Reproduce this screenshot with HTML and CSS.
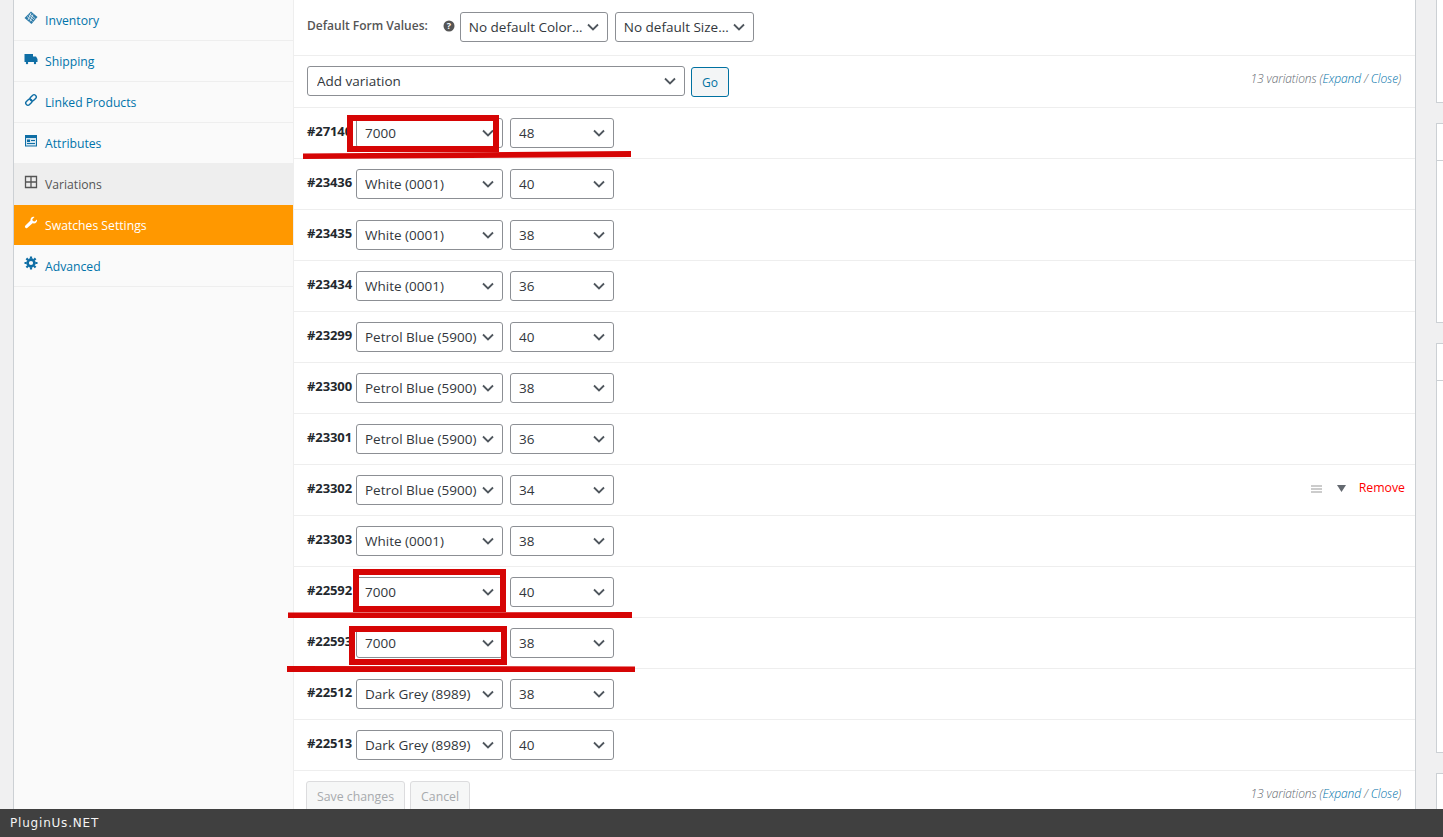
FILE: index.html
```html
<!DOCTYPE html>
<html lang="en">
<head>
<meta charset="utf-8">
<title>Variations</title>
<link rel="stylesheet" href="styles.css">
</head>
<body>
<div class="page">
  <div class="metabox">
    <ul class="tabs">
      <li class="tab"><svg class="ico" viewBox="0 0 14 14"><path d="M7 0.500 13.500 6 7.500 13 0.500 7Z" fill="#2b7aa8"/><path d="M4.500 4 10 9M6 3 11.500 8M3 5.500 8.500 10.500M7 2 4 9M9 3.500 6 10.500" stroke="#fafafa" stroke-width=".7"/></svg><a>Inventory</a></li>
      <li class="tab"><svg class="ico" viewBox="0 0 14 14"><path d="M0.500 2H9V10H0.500ZM9 4.500H12L13.500 7V10H9Z" fill="#0f6ea5"/><circle cx="3" cy="11" r="1.200" fill="#0f6ea5"/><circle cx="11" cy="11" r="1.200" fill="#0f6ea5"/></svg><a>Shipping</a></li>
      <li class="tab"><svg class="ico" viewBox="0 0 14 14"><g fill="none" stroke="#0f6ea5" stroke-width="1.400" transform="rotate(-45 7 7)"><rect x="0.500" y="4.800" width="7" height="4.400" rx="2.200"/><rect x="6.500" y="4.800" width="7" height="4.400" rx="2.200"/></g></svg><a>Linked Products</a></li>
      <li class="tab"><svg class="ico" viewBox="0 0 14 14"><path d="M1 1H13V12.500H1Z" fill="#0f6ea5"/><path d="M2 4H12V11.500H2Z" fill="#d5e6f0"/><path d="M3 5.500H6V8H3ZM7 6H11V7H7ZM3 9H11V10H3Z" fill="#0f6ea5"/></svg><a>Attributes</a></li>
      <li class="tab tab-active"><svg class="ico" viewBox="0 0 14 14"><path d="M1.500 1.500H12.500V12.500H1.500ZM7 1.500V12.500M1.500 7H12.500" fill="none" stroke="#555" stroke-width="1.300"/></svg><a>Variations</a></li>
      <li class="tab tab-orange"><svg class="ico" viewBox="0 0 14 14"><path d="M13 3.500 10.700 5.600 8.800 5.100 8.300 3.200 10.500 1C8.500.2 6.200 1.600 6.500 4.500L1.200 9.800C.2 11 1.800 13 3.200 12L8.600 7.300C11.500 8 13.600 6 13 3.500Z" fill="#fff"/></svg><a>Swatches Settings</a></li>
      <li class="tab"><svg class="ico" viewBox="0 0 14 14"><circle cx="7" cy="7" r="3.400" fill="none" stroke="#0f6ea5" stroke-width="2.600"/><path d="M7 .5V13.500M.5 7H13.500M2.400 2.400 11.600 11.600M11.600 2.400 2.400 11.600" stroke="#0f6ea5" stroke-width="2.200" stroke-dasharray="2.200 8.600 2.200"/></svg><a>Advanced</a></li>
    </ul>
    <div class="panel">
      <div class="defaults">
        <span class="defaults-label">Default Form Values:</span>
        <svg class="help" viewBox="0 0 12 12"><circle cx="6" cy="6" r="5.500" fill="#555"/><text x="6" y="9.200" text-anchor="middle" class="help-q">?</text></svg>
        <select class="sel sel-color"><option>No default Color…</option></select>
        <select class="sel sel-size"><option>No default Size…</option></select>
      </div>
      <div class="toolbar">
        <select class="sel sel-add"><option>Add variation</option></select>
        <button class="go">Go</button>
        <span class="count">13 variations (<a>Expand</a> / <a>Close</a>)</span>
      </div>
      <div class="row"><strong class="vid">#27140</strong><select class="sel sel-attr"><option>7000</option></select><select class="sel sel-num"><option>48</option></select></div>
      <div class="row"><strong class="vid">#23436</strong><select class="sel sel-attr"><option>White (0001)</option></select><select class="sel sel-num"><option>40</option></select></div>
      <div class="row"><strong class="vid">#23435</strong><select class="sel sel-attr"><option>White (0001)</option></select><select class="sel sel-num"><option>38</option></select></div>
      <div class="row"><strong class="vid">#23434</strong><select class="sel sel-attr"><option>White (0001)</option></select><select class="sel sel-num"><option>36</option></select></div>
      <div class="row"><strong class="vid">#23299</strong><select class="sel sel-attr"><option>Petrol Blue (5900)</option></select><select class="sel sel-num"><option>40</option></select></div>
      <div class="row"><strong class="vid">#23300</strong><select class="sel sel-attr"><option>Petrol Blue (5900)</option></select><select class="sel sel-num"><option>38</option></select></div>
      <div class="row"><strong class="vid">#23301</strong><select class="sel sel-attr"><option>Petrol Blue (5900)</option></select><select class="sel sel-num"><option>36</option></select></div>
      <div class="row"><strong class="vid">#23302</strong><select class="sel sel-attr"><option>Petrol Blue (5900)</option></select><select class="sel sel-num"><option>34</option></select>
        <div class="actions">
          <svg class="drag" viewBox="0 0 11 8"><path d="M0 1H11M0 4H11M0 7H11" stroke="#999" stroke-width="1"/></svg>
          <svg class="caret" viewBox="0 0 9 7"><path d="M0 0H9L4.500 7Z" fill="#646970"/></svg>
          <a class="remove">Remove</a>
        </div>
      </div>
      <div class="row"><strong class="vid">#23303</strong><select class="sel sel-attr"><option>White (0001)</option></select><select class="sel sel-num"><option>38</option></select></div>
      <div class="row"><strong class="vid">#22592</strong><select class="sel sel-attr"><option>7000</option></select><select class="sel sel-num"><option>40</option></select></div>
      <div class="row"><strong class="vid">#22593</strong><select class="sel sel-attr"><option>7000</option></select><select class="sel sel-num"><option>38</option></select></div>
      <div class="row"><strong class="vid">#22512</strong><select class="sel sel-attr"><option>Dark Grey (8989)</option></select><select class="sel sel-num"><option>38</option></select></div>
      <div class="row"><strong class="vid">#22513</strong><select class="sel sel-attr"><option>Dark Grey (8989)</option></select><select class="sel sel-num"><option>40</option></select></div>
      <div class="foot">
        <button class="btn-off">Save changes</button>
        <button class="btn-off">Cancel</button>
        <span class="count">13 variations (<a>Expand</a> / <a>Close</a>)</span>
      </div>
    </div>
  </div>
  <aside class="side">
    <div class="box box-a"></div>
    <div class="box box-b"><div class="box-head"></div></div>
    <div class="box box-c"><div class="box-head"></div></div>
    <div class="box box-d"></div>
  </aside>
</div>
<svg class="marks" viewBox="0 0 1443 837" width="1443" height="837">
  <path class="mark-box" d="M350 118H496V149H350Z"/>
  <path class="mark-line" d="M303 153.500 631 151V157L303 159Z"/>
  <path class="mark-box" d="M356 572H503V609H356Z"/>
  <path class="mark-line" d="M288 612.500 632 612V618L288 618Z"/>
  <path class="mark-box" d="M352 629H504V662H352Z"/>
  <path class="mark-line" d="M287 666 635 666.500V672H287Z"/>
</svg>
<footer class="brandbar">PluginUs.NET</footer>
</body>
</html>
```
FILE: styles.css
```css
* { box-sizing: border-box; }
html, body { margin: 0; height: 100%; }
body {
  overflow: hidden;
  background: #f0f0f1;
  font-family: "Open Sans", "Noto Sans", "Liberation Sans", sans-serif;
  font-size: 13px;
  color: #3c434a;
}
.page {
  display: flex;
  align-items: flex-start;
  gap: 20px;
  padding-left: 13px;
  height: 837px;
  overflow: hidden;
}
.metabox {
  display: flex;
  flex: 0 0 1403px;
  height: 837px;
  background: #fff;
  border-left: 1px solid #ccd0d4;
  border-right: 1px solid #ccd0d4;
}
.tabs {
  flex: 0 0 280px;
  margin: 0;
  padding: 0;
  list-style: none;
  background: #fafafa;
  border-right: 1px solid #eee;
}
.tab {
  display: flex;
  align-items: center;
  gap: 7px;
  height: 41px;
  padding: 0 0 0 10px;
  border-bottom: 1px solid #eee;
  color: #0073aa;
  font-size: 12.200px;
}
.tab a { color: inherit; padding-top: 1px; }
.ico { width: 14px; height: 14px; flex: none; margin-top: -5px; }
.tab-active { background: #eee; color: #555; border-bottom: 0; padding-bottom: 1px; }
.tab-orange { background: #ff9800; color: #fff; height: 40px; border-bottom: 0; }
.tab-orange + .tab { height: 42px; }
.panel { flex: 1; min-width: 0; }
.defaults {
  display: flex;
  align-items: center;
  height: 56px;
  padding: 0 0 1px 13px;
  border-bottom: 1px solid #eee;
}
.defaults-label { font-size: 12px; font-weight: 600; color: #555; margin-top: -4px; }
.help { width: 12px; height: 12px; margin: -3px 5px 0 15px; }
.help-q { font-size: 9px; font-weight: 700; fill: #fff; }
.sel {
  appearance: none;
  -webkit-appearance: none;
  height: 30px;
  margin: 0;
  padding: 0 20px 0 8px;
  border: 1px solid #8c8f94;
  border-radius: 3px;
  background: #fff url("data:image/svg+xml,%3Csvg xmlns='http://www.w3.org/2000/svg' width='12' height='8' viewBox='0 0 12 8'%3E%3Cpath d='M1 1.500 6 6.500 11 1.500' fill='none' stroke='%2350575e' stroke-width='1.800'/%3E%3C/svg%3E") no-repeat right 8px center;
  font-family: inherit;
  font-size: 13.500px;
  color: #32373c;
  text-overflow: ellipsis;
  white-space: nowrap;
}
.sel-color { width: 148px; }
.sel-size { width: 139px; margin-left: 7px; }
.sel-add { width: 378px; padding-left: 9px; }
.sel-attr { width: 147px; }
.sel-num { width: 104px; margin-left: 7px; }
.toolbar {
  display: flex;
  align-items: center;
  height: 52px;
  padding: 0 14px 1px 13px;
  border-bottom: 1px solid #eee;
}
.go {
  width: 38px;
  height: 30px;
  margin: 2px 0 0 6px;
  padding: 0;
  border: 1px solid #0071a1;
  border-radius: 3px;
  background: #f3f5f6;
  color: #0071a1;
  font-family: inherit;
  font-size: 12px;
}
.count {
  margin-left: auto;
  margin-top: -5px;
  font-size: 12px;
  font-style: italic;
  font-weight: 300;
  color: #646970;
  letter-spacing: -.1px;
}
.count a { color: #0073aa; }
.row {
  display: flex;
  align-items: center;
  height: 51px;
  padding: 0 10px 1px 13px;
  border-bottom: 1px solid #eee;
}
.vid {
  flex: 0 0 49px;
  margin-top: -4px;
  font-size: 13px;
  font-weight: 700;
  color: #23282d;
  white-space: nowrap;
  letter-spacing: -.1px;
}
.actions { display: flex; align-items: center; margin-left: auto; }
.drag { width: 11px; height: 8px; margin-top: -1px; }
.caret { width: 9px; height: 7px; margin-left: 15px; margin-top: -2px; }
.remove { margin-left: 13px; font-size: 12.300px; color: #f00; margin-top: -5px; }
.foot {
  display: flex;
  align-items: flex-start;
  gap: 5px;
  padding: 10px 14px 0 12px;
}
.foot .count { margin-top: 4px; }
.btn-off {
  height: 32px;
  padding: 0 10px 2px;
  border: 1px solid #dcdcde;
  border-radius: 3px;
  background: #f6f7f7;
  color: #a7aaad;
  font-family: inherit;
  font-size: 12.300px;
}
.side { flex: 1; min-width: 0; }
.box { background: #fff; border: 1px solid #ccd0d4; border-right: 0; margin-bottom: 20px; }
.box-a { height: 103px; border-top: 0; }
.box-b { height: 200px; }
.box-c { height: 410px; }
.box-d { height: 80px; }
.box-head { height: 37px; border-bottom: 1px solid #ccd0d4; }
.marks { position: absolute; left: 0; top: 0; pointer-events: none; }
.mark-box { fill: none; stroke: #d60505; stroke-width: 6; }
.mark-line { fill: #d60505; }
.brandbar {
  position: fixed;
  left: 0;
  right: 0;
  bottom: 0;
  height: 28px;
  padding-left: 10px;
  background: #404040;
  color: #f4f4f4;
  font-family: "DejaVu Sans", sans-serif;
  font-size: 12px;
  line-height: 28px;
  letter-spacing: .8px;
}
```
